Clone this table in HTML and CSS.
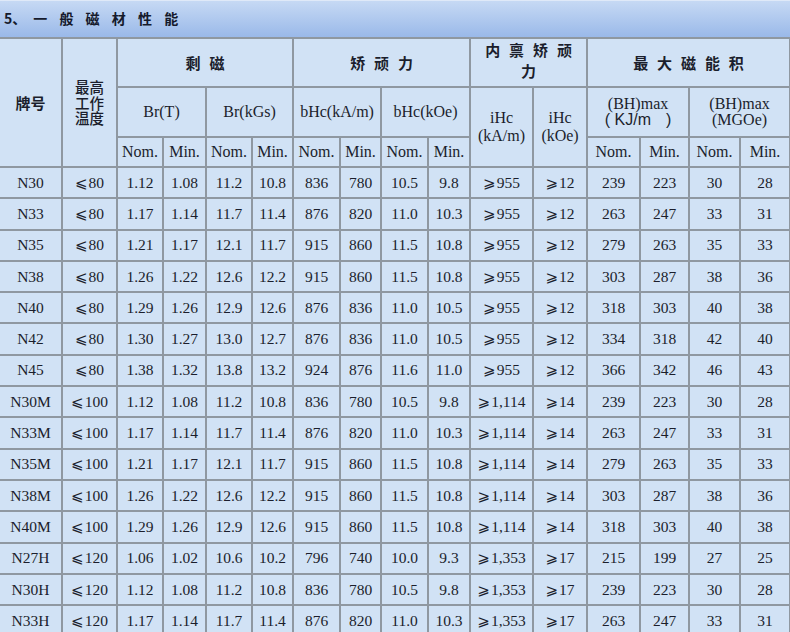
FILE: index.html
```html
<!DOCTYPE html>
<html lang="zh-CN">
<head>
<meta charset="utf-8">
<title>一般磁材性能</title>
<link rel="stylesheet" href="styles.css">
</head>
<body>
<div class="page">
  <div class="title"><span class="num">5、</span><span class="words">一 般 磁 材 性 能</span></div>
  <table class="spec">
    <colgroup>
      <col class="w61"><col class="w53"><col class="w44"><col class="w41"><col class="w44"><col class="w39"><col class="w45"><col class="w39"><col class="w45"><col class="w40"><col class="w61"><col class="w52"><col class="w51"><col class="w47"><col class="w49"><col class="w48">
    </colgroup>
    <thead>
      <tr class="h1">
        <th rowspan="3" class="cn">牌号</th>
        <th rowspan="3" class="cn tight">最高<br>工作<br>温度</th>
        <th colspan="4" class="cn sp">剩 磁</th>
        <th colspan="4" class="cn sp">矫 顽 力</th>
        <th colspan="2" class="cn sp two">内 禀 矫 顽<br>力</th>
        <th colspan="4" class="cn sp">最 大 磁 能 积</th>
      </tr>
      <tr class="h2">
        <th colspan="2">Br(T)</th>
        <th colspan="2">Br(kGs)</th>
        <th colspan="2">bHc(kA/m)</th>
        <th colspan="2">bHc(kOe)</th>
        <th rowspan="2" class="ihc">iHc<br>(kA/m)</th>
        <th rowspan="2" class="ihc">iHc<br>(kOe)</th>
        <th colspan="2" class="bh">(BH)max<br><span class="sans">( KJ/m<span class="gap"></span>)</span></th>
        <th colspan="2" class="bh">(BH)max<br>(MGOe)</th>
      </tr>
      <tr class="h3">
        <th>Nom.</th><th>Min.</th><th>Nom.</th><th>Min.</th><th>Nom.</th><th>Min.</th><th>Nom.</th><th>Min.</th>
        <th>Nom.</th><th>Min.</th><th>Nom.</th><th>Min.</th>
      </tr>
    </thead>
    <tbody>
      <tr><td>N30</td><td><span class="sym">⩽</span>80</td><td>1.12</td><td>1.08</td><td>11.2</td><td>10.8</td><td>836</td><td>780</td><td>10.5</td><td>9.8</td><td><span class="sym">⩾</span>955</td><td><span class="sym">⩾</span>12</td><td>239</td><td>223</td><td>30</td><td>28</td></tr>
      <tr><td>N33</td><td><span class="sym">⩽</span>80</td><td>1.17</td><td>1.14</td><td>11.7</td><td>11.4</td><td>876</td><td>820</td><td>11.0</td><td>10.3</td><td><span class="sym">⩾</span>955</td><td><span class="sym">⩾</span>12</td><td>263</td><td>247</td><td>33</td><td>31</td></tr>
      <tr><td>N35</td><td><span class="sym">⩽</span>80</td><td>1.21</td><td>1.17</td><td>12.1</td><td>11.7</td><td>915</td><td>860</td><td>11.5</td><td>10.8</td><td><span class="sym">⩾</span>955</td><td><span class="sym">⩾</span>12</td><td>279</td><td>263</td><td>35</td><td>33</td></tr>
      <tr><td>N38</td><td><span class="sym">⩽</span>80</td><td>1.26</td><td>1.22</td><td>12.6</td><td>12.2</td><td>915</td><td>860</td><td>11.5</td><td>10.8</td><td><span class="sym">⩾</span>955</td><td><span class="sym">⩾</span>12</td><td>303</td><td>287</td><td>38</td><td>36</td></tr>
      <tr><td>N40</td><td><span class="sym">⩽</span>80</td><td>1.29</td><td>1.26</td><td>12.9</td><td>12.6</td><td>876</td><td>836</td><td>11.0</td><td>10.5</td><td><span class="sym">⩾</span>955</td><td><span class="sym">⩾</span>12</td><td>318</td><td>303</td><td>40</td><td>38</td></tr>
      <tr><td>N42</td><td><span class="sym">⩽</span>80</td><td>1.30</td><td>1.27</td><td>13.0</td><td>12.7</td><td>876</td><td>836</td><td>11.0</td><td>10.5</td><td><span class="sym">⩾</span>955</td><td><span class="sym">⩾</span>12</td><td>334</td><td>318</td><td>42</td><td>40</td></tr>
      <tr><td>N45</td><td><span class="sym">⩽</span>80</td><td>1.38</td><td>1.32</td><td>13.8</td><td>13.2</td><td>924</td><td>876</td><td>11.6</td><td>11.0</td><td><span class="sym">⩾</span>955</td><td><span class="sym">⩾</span>12</td><td>366</td><td>342</td><td>46</td><td>43</td></tr>
      <tr><td>N30M</td><td><span class="sym">⩽</span>100</td><td>1.12</td><td>1.08</td><td>11.2</td><td>10.8</td><td>836</td><td>780</td><td>10.5</td><td>9.8</td><td><span class="sym">⩾</span>1,114</td><td><span class="sym">⩾</span>14</td><td>239</td><td>223</td><td>30</td><td>28</td></tr>
      <tr><td>N33M</td><td><span class="sym">⩽</span>100</td><td>1.17</td><td>1.14</td><td>11.7</td><td>11.4</td><td>876</td><td>820</td><td>11.0</td><td>10.3</td><td><span class="sym">⩾</span>1,114</td><td><span class="sym">⩾</span>14</td><td>263</td><td>247</td><td>33</td><td>31</td></tr>
      <tr><td>N35M</td><td><span class="sym">⩽</span>100</td><td>1.21</td><td>1.17</td><td>12.1</td><td>11.7</td><td>915</td><td>860</td><td>11.5</td><td>10.8</td><td><span class="sym">⩾</span>1,114</td><td><span class="sym">⩾</span>14</td><td>279</td><td>263</td><td>35</td><td>33</td></tr>
      <tr><td>N38M</td><td><span class="sym">⩽</span>100</td><td>1.26</td><td>1.22</td><td>12.6</td><td>12.2</td><td>915</td><td>860</td><td>11.5</td><td>10.8</td><td><span class="sym">⩾</span>1,114</td><td><span class="sym">⩾</span>14</td><td>303</td><td>287</td><td>38</td><td>36</td></tr>
      <tr><td>N40M</td><td><span class="sym">⩽</span>100</td><td>1.29</td><td>1.26</td><td>12.9</td><td>12.6</td><td>915</td><td>860</td><td>11.5</td><td>10.8</td><td><span class="sym">⩾</span>1,114</td><td><span class="sym">⩾</span>14</td><td>318</td><td>303</td><td>40</td><td>38</td></tr>
      <tr><td>N27H</td><td><span class="sym">⩽</span>120</td><td>1.06</td><td>1.02</td><td>10.6</td><td>10.2</td><td>796</td><td>740</td><td>10.0</td><td>9.3</td><td><span class="sym">⩾</span>1,353</td><td><span class="sym">⩾</span>17</td><td>215</td><td>199</td><td>27</td><td>25</td></tr>
      <tr><td>N30H</td><td><span class="sym">⩽</span>120</td><td>1.12</td><td>1.08</td><td>11.2</td><td>10.8</td><td>836</td><td>780</td><td>10.5</td><td>9.8</td><td><span class="sym">⩾</span>1,353</td><td><span class="sym">⩾</span>17</td><td>239</td><td>223</td><td>30</td><td>28</td></tr>
      <tr><td>N33H</td><td><span class="sym">⩽</span>120</td><td>1.17</td><td>1.14</td><td>11.7</td><td>11.4</td><td>876</td><td>820</td><td>11.0</td><td>10.3</td><td><span class="sym">⩾</span>1,353</td><td><span class="sym">⩾</span>17</td><td>263</td><td>247</td><td>33</td><td>31</td></tr>
    </tbody>
  </table>
</div>
</body>
</html>
```
FILE: styles.css
```css
html, body {
  margin: 0;
  padding: 0;
  background: #d1e2f5;
}
.page {
  width: 790px;
  height: 632px;
  overflow: hidden;
}
.title {
  height: 37px;
  box-sizing: border-box;
  border-top: 1px solid #dfe9f8;
  background: linear-gradient(#c6d9f4, #9ab9e9);
  padding-left: 4px;
  font-family: "Noto Sans CJK SC", sans-serif;
  font-weight: 700;
  font-size: 14px;
  line-height: 34px;
  color: #151a2c;
  white-space: pre;
}
.title .num { margin-right: 7px; }
.title .words { word-spacing: 9px; }

.spec {
  table-layout: fixed;
  width: 793px;
  margin-left: -2px;
  border-collapse: separate;
  border-spacing: 2px;
  background: #8f98a1;
  color: #1b1e2c;
}
.w61 { width: 61px; }
.w53 { width: 53px; }
.w44 { width: 44px; }
.w41 { width: 41px; }
.w39 { width: 39px; }
.w45 { width: 45px; }
.w40 { width: 40px; }
.w52 { width: 52px; }
.w51 { width: 51px; }
.w47 { width: 47px; }
.w49 { width: 49px; }
.w48 { width: 48px; }

.spec th, .spec td {
  padding: 0;
  background: #d1e2f5;
  text-align: center;
  vertical-align: middle;
  overflow: hidden;
  white-space: nowrap;
}
.spec th {
  font-family: "Liberation Serif", "Times New Roman", serif;
  font-weight: 400;
  font-size: 16px;
  line-height: 16px;
}
.spec th.cn {
  font-family: "Noto Sans CJK SC", sans-serif;
  font-weight: 700;
  font-size: 15px;
  line-height: 16px;
}
.spec th.tight {
  font-weight: 500;
  font-size: 14.5px;
  line-height: 15.5px;
}
.spec th.sp { word-spacing: 5.5px; }
.spec th.two { line-height: 21px; padding-bottom: 5px; }
.spec th.ihc { line-height: 18px; }
.sans {
  font-family: "Liberation Sans", Arial, sans-serif;
}
.gap {
  display: inline-block;
  width: 15px;
}
.h1 { height: 46px; }
.h2 { height: 48px; }
.h3 { height: 28px; }
.spec tbody tr { height: 29.3px; }
.spec td {
  font-family: "Liberation Serif", "Times New Roman", serif;
  font-size: 15.5px;
  line-height: 18px;
}
.sym {
  font-family: "DejaVu Sans", sans-serif;
  font-size: 15px;
  margin-right: 1px;
}
```
